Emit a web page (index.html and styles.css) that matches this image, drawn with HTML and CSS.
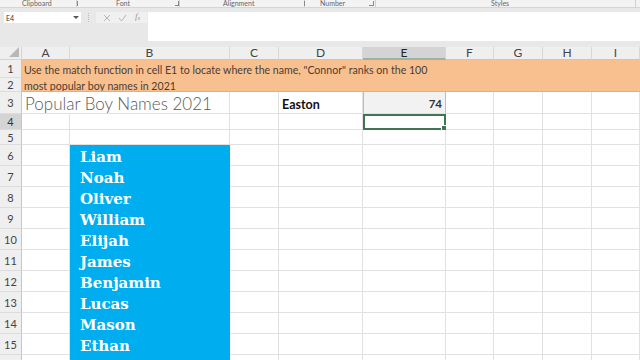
FILE: index.html
```html
<!DOCTYPE html>
<html>
<head>
<meta charset="utf-8">
<link rel="stylesheet" href="styles.css">
</head>
<body>
<div class="app">
  <div class="ribbon">
    <div class="grp g1"><span class="gl">Clipboard</span><span class="ln"></span></div>
    <div class="grp g2"><span class="gl">Font</span><span class="ln"></span></div>
    <div class="grp g3"><span class="gl">Alignment</span><span class="ln"></span></div>
    <div class="grp g4"><span class="gl">Number</span><span class="ln"></span></div>
    <div class="grp g5"><span class="gl">Styles</span></div>
  </div>
  <div class="fbar">
    <div class="namebox"><span>E4</span><svg width="6" height="4" viewBox="0 0 6 4"><path d="M0 0h6L3 3z" fill="#555"/></svg></div>
    <div class="dots"></div>
    <div class="fbtns">
      <svg width="8" height="8" viewBox="0 0 8 8"><path d="M1 1l6 6M7 1l-6 6" stroke="#b5b5b5" stroke-width="1"/></svg>
      <svg width="9" height="8" viewBox="0 0 9 8"><path d="M1 4l2.5 3L8 1" stroke="#b5b5b5" stroke-width="1" fill="none"/></svg>
      <span class="fx">f<sub>x</sub></span>
    </div>
    <div class="finput"></div>
  </div>
  <div class="sheet">
    <div class="corner"><svg width="10" height="10" viewBox="0 0 10 10"><path d="M10 0V10H0z" fill="#b8b8b8"/></svg></div>
    <div class="ch">A</div><div class="ch">B</div><div class="ch">C</div><div class="ch">D</div><div class="ch sel">E</div><div class="ch">F</div><div class="ch">G</div><div class="ch">H</div><div class="ch">I</div>

    <div class="rh r1">1</div>
    <div class="rh r2">2</div>
    <div class="note">
      <div>Use the match function in cell E1 to locate where the name, "Connor" ranks on the 100</div>
      <div>most popular boy names in 2021</div>
    </div>

    <div class="rh">3</div>
    <div class="c title">Popular Boy Names 2021</div>
    <div class="c"></div>
    <div class="c easton">Easton</div>
    <div class="c e3">74</div>
    <div class="c"></div><div class="c"></div><div class="c"></div><div class="c"></div>

    <div class="rh sel">4</div>
    <div class="c"></div><div class="c"></div><div class="c"></div><div class="c"></div>
    <div class="c e4"><span class="handle"></span></div>
    <div class="c"></div><div class="c"></div><div class="c"></div><div class="c"></div>

    <div class="rh">5</div>
    <div class="c"></div><div class="c"></div><div class="c"></div><div class="c"></div><div class="c"></div><div class="c"></div><div class="c"></div><div class="c"></div><div class="c"></div>

    <div class="rh">6</div><div class="rh">7</div><div class="rh">8</div><div class="rh">9</div><div class="rh">10</div>
    <div class="rh">11</div><div class="rh">12</div><div class="rh">13</div><div class="rh">14</div><div class="rh">15</div><div class="rh">16</div>

    <div class="acol"></div>
    <div class="names">
      <div>Liam</div><div>Noah</div><div>Oliver</div><div>William</div><div>Elijah</div>
      <div>James</div><div>Benjamin</div><div>Lucas</div><div>Mason</div><div>Ethan</div><div>Alexander</div>
    </div>
    <div class="rest c-c"></div>
    <div class="rest c-d"></div>
    <div class="rest c-e"></div>
    <div class="rest c-f"></div>
    <div class="rest c-g"></div>
    <div class="rest c-h"></div>
    <div class="rest c-i"></div>
  </div>
</div>
</body>
</html>
```
FILE: styles.css
```css
html, body {
  margin: 0;
  padding: 0;
  width: 640px;
  height: 360px;
  overflow: hidden;
  background: #fff;
  font-family: "Lato", "Open Sans", sans-serif;
}
.app {
  width: 640px;
  height: 360px;
  overflow: hidden;
  background: #e8e8e8;
}
.ribbon {
  height: 7px;
  background: #f3f3f3;
  border-bottom: 1px solid #d5d5d5;
  display: flex;
  overflow: hidden;
  font-size: 7px;
  color: #666;
  line-height: 6px;
}
.grp {
  display: flex;
  align-items: flex-start;
  border-right: 1px solid #cfcfcf;
  box-sizing: border-box;
}
.gl { display: block; }
.ln {
  width: 4px; height: 4px;
  border-right: 1px solid #888;
  border-bottom: 1px solid #888;
  margin-top: 1px;
}
.g1 { width: 77px; padding-left: 22px; gap: 25px; }
.g2 { width: 103px; padding-left: 39px; gap: 45px; }
.g3 { width: 125px; padding-left: 43px; gap: 50px; }
.g4 { width: 71px; padding-left: 15px; gap: 24px; }
.g5 { width: 260px; padding-left: 115px; }

.fbar {
  height: 39px;
  display: flex;
  align-items: flex-start;
  padding-top: 4px;
  box-sizing: border-box;
}
.namebox {
  margin-left: 4px;
  width: 77px;
  height: 11px;
  background: #fff;
  display: flex;
  align-items: center;
  justify-content: space-between;
  padding: 0 2px;
  box-sizing: border-box;
  font-size: 7px;
  color: #333;
}
.dots {
  width: 1px;
  height: 9px;
  margin: 1px 6px 0 7px;
  border-left: 1px dotted #bbb;
}
.fbtns {
  width: 51px;
  height: 11px;
  background: #f0f0f0;
  display: flex;
  align-items: center;
  justify-content: space-around;
  padding: 0 3px;
  box-sizing: border-box;
}
.fx {
  font-family: "Liberation Serif", serif;
  font-style: italic;
  font-size: 9px;
  color: #999;
  line-height: 9px;
}
.fx sub { font-size: 6px; vertical-align: -1px; }
.finput {
  margin-left: 1px;
  flex: 1;
  height: 29px;
  background: #fff;
}

.sheet {
  display: grid;
  grid-template-columns: 22px 48px 160px 49px 84px 83px 48px 49px 49px 48px;
  grid-template-rows: 13px 18px 14px 22px 16px 15px repeat(11, 21px);
  background: #fff;
}
.corner {
  background: #efefef;
  border-right: 1px solid #d4d4d4;
  border-bottom: 1px solid #d4d4d4;
  display: flex;
  align-items: flex-end;
  justify-content: flex-end;
  padding: 0 2px 2px 0;
  box-sizing: border-box;
}
.ch {
  background: #efefef;
  border-right: 1px solid #d8d8d8;
  border-bottom: 1px solid #c6c6c6;
  font-size: 12px;
  line-height: 12px;
  text-align: center;
  color: #444;
  box-sizing: border-box;
}
.ch.sel {
  background: #d4d4d4;
  border-bottom: 2px solid #9bb3a3;
  color: #222;
}
.rh {
  grid-column: 1;
  background: #efefef;
  border-right: 1px solid #c6c6c6;
  border-bottom: 1px solid #dcdcdc;
  font-size: 11px;
  color: #444;
  display: flex;
  align-items: center;
  justify-content: center;
  box-sizing: border-box;
}
.rh.sel { background: #d4d4d4; color: #333; }
.r1 { grid-row: 2; }
.r2 { grid-row: 3; }
.note {
  grid-column: 2 / 11;
  grid-row: 2 / 4;
  background: #f9c08f;
  color: #4a3d33;
  font-size: 10.6px;
  padding: 2px 0 0 2px;
  line-height: 16px;
  white-space: nowrap;
  overflow: hidden;
  border-bottom: 1px solid #e8ad7c;
  box-sizing: border-box;
}
.c {
  border-right: 1px solid #e1e1e1;
  border-bottom: 1px solid #e1e1e1;
  box-sizing: border-box;
  white-space: nowrap;
  position: relative;
}
.title {
  grid-column: 2 / 4;
  font-size: 17px;
  color: #595959;
  padding-left: 3px;
  line-height: 24px;
  font-weight: 300;
}
.easton {
  font-weight: 700;
  font-size: 12.5px;
  color: #111;
  padding: 5px 0 0 3px;
}
.e3 {
  background: #f2f2f2;
  border-left: 1px solid #bdbdbd;
  border-right: 1px solid #bdbdbd;
  font-weight: 700;
  font-size: 11.5px;
  color: #333;
  text-align: right;
  padding: 5px 3px 0 0;
}
.e4 {
  border: 2px solid #3f7552;
}
.handle {
  position: absolute;
  right: -3px;
  bottom: -3px;
  width: 4px;
  height: 4px;
  background: #3f7552;
  border: 1px solid #fff;
}
.acol {
  grid-column: 2;
  grid-row: 7 / 18;
  background-image: linear-gradient(#e1e1e1 1px, transparent 1px);
  background-size: 100% 21px;
  background-position: 0 20px;
  border-right: 1px solid #e1e1e1;
}
.names {
  grid-column: 3;
  grid-row: 7 / 18;
  background: #00aeef;
  color: #fff;
  font-family: "DejaVu Serif", serif;
  font-weight: 700;
  font-size: 15px;
  line-height: 21px;
  padding: 2px 0 0 10px;
}
.rest {
  grid-row: 7 / 18;
  background-image: linear-gradient(#e1e1e1 1px, transparent 1px);
  background-size: 100% 21px;
  background-position: 0 20px;
  border-right: 1px solid #e1e1e1;
  box-sizing: border-box;
}
.c-c { grid-column: 4; }
.c-d { grid-column: 5; }
.c-e { grid-column: 6; }
.c-f { grid-column: 7; }
.c-g { grid-column: 8; }
.c-h { grid-column: 9; }
.c-i { grid-column: 10; }
```
